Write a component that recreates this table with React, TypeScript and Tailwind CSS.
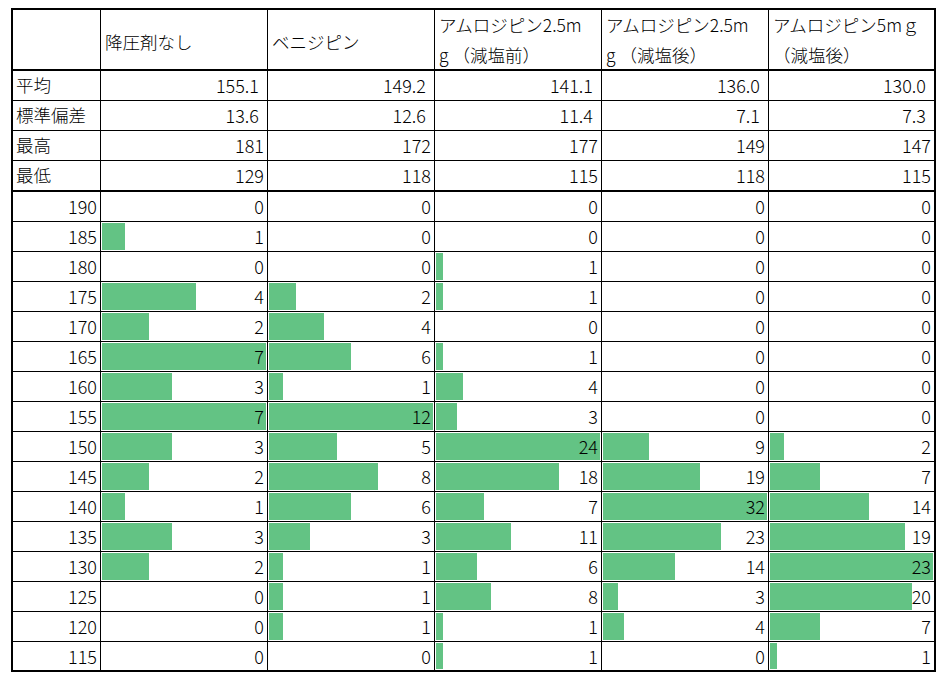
import React from "react";

type Col = {
  title: React.ReactNode;
  stats: string[];
  counts: number[];
};

const bins = [190, 185, 180, 175, 170, 165, 160, 155, 150, 145, 140, 135, 130, 125, 120, 115];
const statLabels = ["平均", "標準偏差", "最高", "最低"];

const columns: Col[] = [
  {
    title: "降圧剤なし",
    stats: ["155.1", "13.6", "181", "129"],
    counts: [0, 1, 0, 4, 2, 7, 3, 7, 3, 2, 1, 3, 2, 0, 0, 0],
  },
  {
    title: "ベニジピン",
    stats: ["149.2", "12.6", "172", "118"],
    counts: [0, 0, 0, 2, 4, 6, 1, 12, 5, 8, 6, 3, 1, 1, 1, 0],
  },
  {
    title: (
      <>
        アムロジピン2.5m
        <br />
        g （減塩前）
      </>
    ),
    stats: ["141.1", "11.4", "177", "115"],
    counts: [0, 0, 1, 1, 0, 1, 4, 3, 24, 18, 7, 11, 6, 8, 1, 1],
  },
  {
    title: (
      <>
        アムロジピン2.5m
        <br />
        g （減塩後）
      </>
    ),
    stats: ["136.0", "7.1", "149", "118"],
    counts: [0, 0, 0, 0, 0, 0, 0, 0, 9, 19, 32, 23, 14, 3, 4, 0],
  },
  {
    title: (
      <>
        アムロジピン5mｇ
        <br />
        （減塩後）
      </>
    ),
    stats: ["130.0", "7.3", "147", "115"],
    counts: [0, 0, 0, 0, 0, 0, 0, 0, 2, 7, 14, 19, 23, 20, 7, 1],
  },
];

// column widths incl. right border, the last column has none
const widths = ["w-[167px]", "w-[167px]", "w-[167px]", "w-[167px]", "w-[165px]"];
const barMax = [164, 164, 164, 164, 163];

export default function App() {
  return (
    <div className="min-h-screen bg-white pl-[11px] pt-[8px] font-['Noto_Sans_CJK_JP',sans-serif] font-light text-[17.5px] text-black">
      <div className="w-[925px] border-2 border-black">
        {/* header */}
        <div className="flex h-[61px] border-b-2 border-black">
          <div className="w-[88px] border-r border-black" />
          {columns.map((c, i) => (
            <div
              key={i}
              className={`${widths[i]} flex flex-col justify-center pl-[4px] leading-[30px] whitespace-pre ${
                i < 4 ? "border-r border-black" : ""
              } ${typeof c.title === "string" ? "pt-[4px]" : ""}`}
            >
              {c.title}
            </div>
          ))}
        </div>

        {/* summary rows */}
        {statLabels.map((label, r) => (
          <div
            key={label}
            className={`flex ${r === 3 ? "h-[31px] border-b-2" : "h-[30px] border-b"} border-black`}
          >
            <div className="w-[88px] border-r border-black pl-[3px] flex items-center">{label}</div>
            {columns.map((c, i) => (
              <div
                key={i}
                className={`${widths[i]} flex items-center justify-end text-[18px] ${
                  c.stats[r].includes(".") ? "pr-[8px]" : "pr-[3px]"
                } ${i < 4 ? "border-r border-black" : ""}`}
              >
                {c.stats[r]}
              </div>
            ))}
          </div>
        ))}

        {/* histogram rows */}
        {bins.map((bin, r) => {
          const last = r === bins.length - 1;
          return (
            <div key={bin} className={`flex text-[18px] ${last ? "h-[28px]" : "h-[30px] border-b border-black"}`}>
              <div className="w-[88px] border-r border-black pr-[3px] flex items-center justify-end">{bin}</div>
              {columns.map((c, i) => {
                const max = Math.max(...c.counts);
                const v = c.counts[r];
                return (
                  <div
                    key={i}
                    className={`${widths[i]} relative flex items-center justify-end pr-[3px] ${
                      i < 4 ? "border-r border-black" : ""
                    }`}
                  >
                    {v > 0 && (
                      <div
                        className="absolute left-[1px] top-[1px] bottom-[1px] bg-[#63c384]"
                        style={{ width: Math.round((v / max) * barMax[i]) }}
                      />
                    )}
                    <span className="relative">{v}</span>
                  </div>
                );
              })}
            </div>
          );
        })}
      </div>
    </div>
  );
}
